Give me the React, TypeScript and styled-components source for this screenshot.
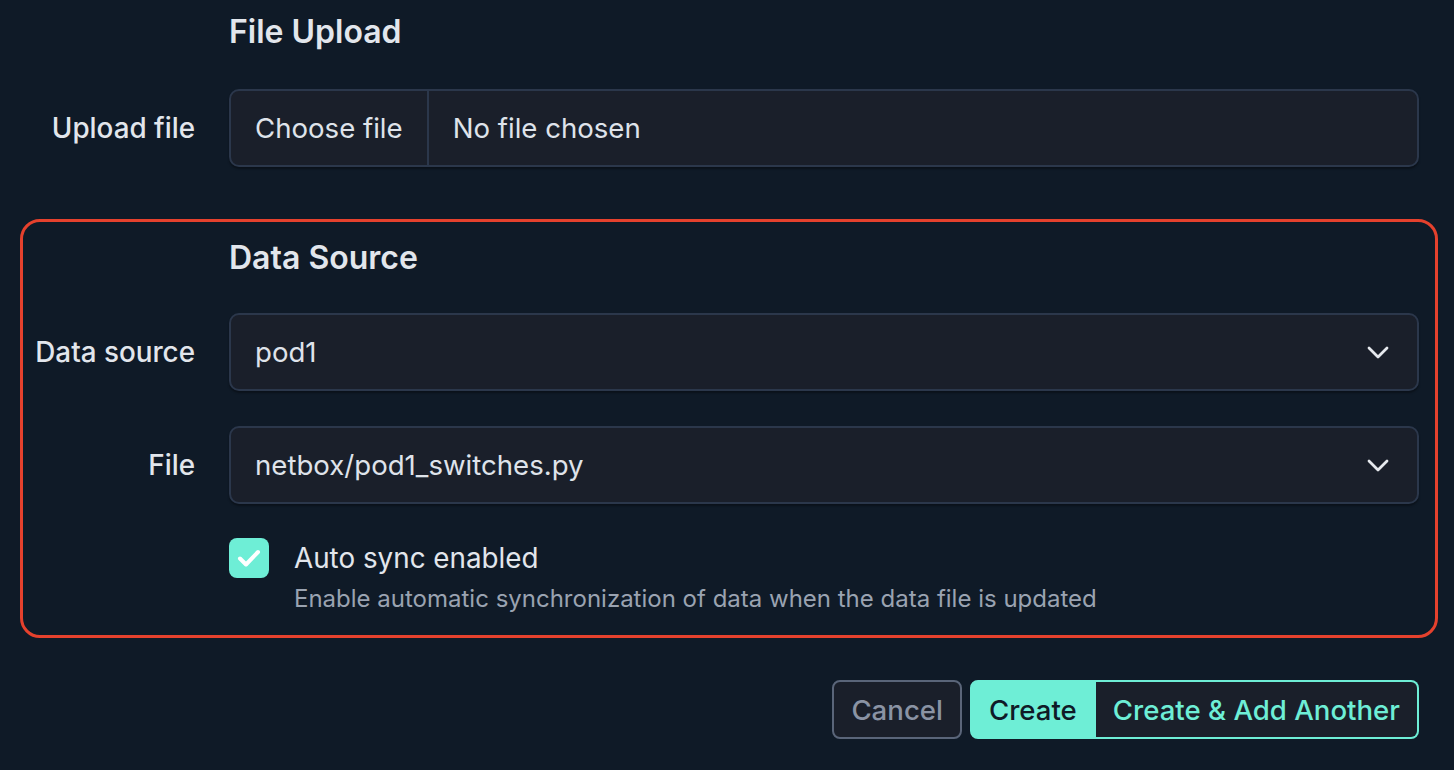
import React from 'react';
import styled, { createGlobalStyle } from 'styled-components';

const GlobalStyle = createGlobalStyle`
  html, body {
    margin: 0;
    padding: 0;
    background: #0f1a27;
  }
  body {
    font-family: Inter, "Noto Sans", "Liberation Sans", sans-serif;
    color: #dfe3ea;
    -webkit-font-smoothing: antialiased;
  }
`;

const Page = styled.form`
  width: 1454px;
  min-height: 770px;
  box-sizing: border-box;
  padding: 13px 0 0 0;
`;

const Field = styled.div<{ $labelWidth: number; $padRight: number }>`
  display: grid;
  grid-template-columns: ${(p) => p.$labelWidth}px 1fr;
  column-gap: 34px;
  align-items: center;
  padding-right: ${(p) => p.$padRight}px;
`;

const SectionTitle = styled.h2`
  grid-column: 2;
  margin: 0;
  font-size: 32px;
  line-height: 38px;
  font-weight: 600;
  color: #e2e6ec;
`;

const Label = styled.label`
  text-align: right;
  font-size: 27.8px;
  font-weight: 500;
  color: #e2e6ec;
  white-space: nowrap;
`;

const Control = styled.div`
  grid-column: 2;
`;

const FileBox = styled.div`
  display: flex;
  height: 78px;
  box-sizing: border-box;
  border: 2px solid #2b374b;
  border-radius: 10px;
  background: #1a1f2a;
  box-shadow: 0 2px 2px rgba(0, 0, 0, 0.35);
  overflow: hidden;
  font-size: 27.6px;
  color: #dfe3ea;
`;

const FileButton = styled.span`
  display: flex;
  align-items: center;
  padding: 0 24px;
  border-right: 2px solid #2b374b;
`;

const FileName = styled.span`
  display: flex;
  align-items: center;
  padding: 0 24px;
`;

const Select = styled.div`
  display: flex;
  align-items: center;
  justify-content: space-between;
  height: 78px;
  box-sizing: border-box;
  padding: 0 28px 0 24px;
  border: 2px solid #2b374b;
  border-radius: 10px;
  background: #1a1f2a;
  box-shadow: 0 2px 2px rgba(0, 0, 0, 0.35);
  font-size: 27.6px;
  color: #dfe3ea;
`;

const Highlight = styled.section`
  margin: 52px 16px 0 20px;
  padding: 17px 0 20px 0;
  border: 3px solid #e5412d;
  border-radius: 20px;
`;

const Stack = styled.div<{ $gap: number }>`
  margin-top: ${(p) => p.$gap}px;
`;

const CheckRow = styled.div`
  display: grid;
  grid-template-columns: 40px 1fr;
  column-gap: 25px;
  align-items: center;
`;

const CheckBox = styled.span`
  display: flex;
  align-items: center;
  justify-content: center;
  width: 40px;
  height: 40px;
  border-radius: 8px;
  background: #6eeed6;
`;

const CheckLabel = styled.span`
  font-size: 27.8px;
  color: #e2e6ec;
`;

const Help = styled.div`
  grid-column: 2;
  margin-top: 5px;
  font-size: 24px;
  line-height: 32px;
  color: #9aa3b1;
`;

const Actions = styled.div`
  display: flex;
  justify-content: flex-end;
  gap: 8px;
  margin-top: 42px;
  padding-right: 35px;
`;

const Button = styled.button<{ $variant: 'cancel' | 'primary' | 'outline' }>`
  height: 59px;
  box-sizing: border-box;
  padding: 0 17px;
  font-family: inherit;
  font-size: 27.6px;
  font-weight: 500;
  border: 2px solid;
  border-radius: 8px;
  background: ${(p) => (p.$variant === 'primary' ? '#6eeed6' : '#1a1f2a')};
  color: ${(p) => ({ cancel: '#8a93a4', primary: '#0f1a27', outline: '#6eeed6' }[p.$variant])};
  border-color: ${(p) => (p.$variant === 'cancel' ? '#5a6579' : '#6eeed6')};
`;

const Group = styled.div`
  display: flex;
  ${Button}:first-child {
    border-top-right-radius: 0;
    border-bottom-right-radius: 0;
  }
  ${Button}:last-child {
    border-top-left-radius: 0;
    border-bottom-left-radius: 0;
    border-left: none;
  }
`;

const Chevron = () => (
  <svg width="22" height="13" viewBox="0 0 22 13" fill="none">
    <path d="M2 2l9 9 9-9" stroke="#e6e9ee" strokeWidth="2.8" strokeLinecap="round" strokeLinejoin="round" />
  </svg>
);

const Check = () => (
  <svg width="24" height="20" viewBox="0 0 24 20" fill="none">
    <path d="M3 10.5l6 6L21 4" stroke="#ffffff" strokeWidth="4" strokeLinecap="round" strokeLinejoin="round" />
  </svg>
);

const App = () => (
  <>
    <GlobalStyle />
    <Page>
      <Field $labelWidth={195} $padRight={35}>
        <SectionTitle>File Upload</SectionTitle>
      </Field>
      <Stack $gap={38}>
        <Field $labelWidth={195} $padRight={35}>
          <Label>Upload file</Label>
          <FileBox>
            <FileButton>Choose file</FileButton>
            <FileName>No file chosen</FileName>
          </FileBox>
        </Field>
      </Stack>

      <Highlight>
        <Field $labelWidth={172} $padRight={16}>
          <SectionTitle>Data Source</SectionTitle>
        </Field>
        <Stack $gap={36}>
          <Field $labelWidth={172} $padRight={16}>
            <Label>Data source</Label>
            <Select>
              pod1
              <Chevron />
            </Select>
          </Field>
        </Stack>
        <Stack $gap={35}>
          <Field $labelWidth={172} $padRight={16}>
            <Label>File</Label>
            <Select>
              netbox/pod1_switches.py
              <Chevron />
            </Select>
          </Field>
        </Stack>
        <Stack $gap={34}>
          <Field $labelWidth={172} $padRight={16}>
            <Control>
              <CheckRow>
                <CheckBox>
                  <Check />
                </CheckBox>
                <CheckLabel>Auto sync enabled</CheckLabel>
                <Help>Enable automatic synchronization of data when the data file is updated</Help>
              </CheckRow>
            </Control>
          </Field>
        </Stack>
      </Highlight>

      <Actions>
        <Button type="button" $variant="cancel">Cancel</Button>
        <Group>
          <Button type="button" $variant="primary">Create</Button>
          <Button type="button" $variant="outline">Create &amp; Add Another</Button>
        </Group>
      </Actions>
    </Page>
  </>
);

export default App;
